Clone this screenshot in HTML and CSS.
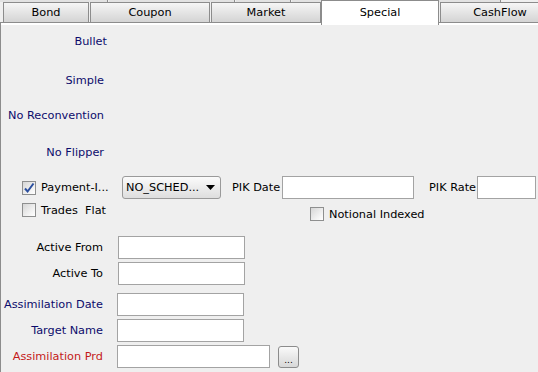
FILE: index.html
```html
<!DOCTYPE html>
<html lang="en">
<head>
  <meta charset="UTF-8">
  <title>Special</title>
  <link rel="stylesheet" href="styles.css">
</head>
<body>
  <div class="tabs">
    <div class="back-row">
      <span class="back b1"></span>
      <span class="back b2"></span>
      <span class="back b3"></span>
      <span class="back b4"></span>
      <span class="back b5"></span>
    </div>
    <div class="tab-row">
      <div class="tab tab-bond">Bond</div>
      <div class="tab tab-coupon">Coupon</div>
      <div class="tab tab-market">Market</div>
      <div class="tab tab-special selected">Special</div>
      <div class="tab tab-cash">CashFlow</div>
    </div>
  </div>

  <div class="panel">
    <div class="flags">
      <div class="flag flag-wide">Bullet</div>
      <div class="flag flag-simple">Simple</div>
      <div class="flag flag-recon">No Reconvention</div>
      <div class="flag flag-flipper">No Flipper</div>
    </div>

    <div class="opt-row">
      <label class="check-item">
        <span class="box checked">
          <svg width="12" height="12" viewBox="0 0 12 12"><path d="M2 6.5 L4.6 9.5 L10.5 1.5" fill="none" stroke="#2b4f9e" stroke-width="2"/></svg>
        </span>
        <span class="check-text pay-text">Payment-I...</span>
      </label>
      <div class="combo">
        <span>NO_SCHED...</span>
        <svg width="9" height="5" viewBox="0 0 9 5"><path d="M0 0 H9 L4.5 5 Z" fill="#000"/></svg>
      </div>
      <span class="plain pik-date">PIK Date</span>
      <div class="field f-pikdate"></div>
      <span class="plain pik-rate">PIK Rate</span>
      <div class="field f-pikrate"></div>
    </div>

    <div class="opt-row2">
      <label class="check-item trades">
        <span class="box"></span>
        <span class="check-text">Trades&nbsp; Flat</span>
      </label>
      <label class="check-item notional">
        <span class="box"></span>
        <span class="check-text">Notional Indexed</span>
      </label>
    </div>

    <div class="form">
      <div class="frow">
        <span class="flbl">Active From</span>
        <div class="field f-std"></div>
      </div>
      <div class="frow gap3">
        <span class="flbl">Active To</span>
        <div class="field f-std"></div>
      </div>
      <div class="frow gap8">
        <span class="flbl navy">Assimilation Date</span>
        <div class="field f-std tight"></div>
      </div>
      <div class="frow gap3">
        <span class="flbl navy">Target Name</span>
        <div class="field f-std tight"></div>
      </div>
      <div class="frow gap3">
        <span class="flbl red">Assimilation Prd</span>
        <div class="field f-long tight"></div>
        <button class="dots">...</button>
      </div>
    </div>
  </div>
</body>
</html>
```

FILE: styles.css
```css
html, body {
  margin: 0;
  padding: 0;
}

body {
  width: 538px;
  height: 372px;
  overflow: hidden;
  background: #efefef;
  font-family: "DejaVu Sans", Verdana, sans-serif;
  font-size: 11.3px;
  color: #000;
}

/* tab strip */
.tabs {
  height: 22px;
}

.back-row {
  display: flex;
  height: 2px;
  overflow: hidden;
}

.back {
  flex: none;
  height: 2px;
  background: #e2e2e2;
  border-right: 1px solid #8c8c8c;
  margin-right: 1px;
}

.b1 { width: 107px; }
.b2 { width: 125px; }
.b3 { width: 54px; }
.b4 { width: 144px; }
.b5 { width: 62px; }

.tab-row {
  display: flex;
  align-items: flex-end;
  height: 20px;
  padding-left: 3px;
}

.tab {
  flex: none;
  box-sizing: border-box;
  height: 20px;
  line-height: 20px;
  margin-right: 1px;
  text-align: center;
  white-space: nowrap;
  overflow: hidden;
  border: 1px solid #8c8c8c;
  border-bottom: 0;
  background: linear-gradient(#f6f6f6, #e6e6e6 45%, #d4d4d4);
}

.tab-bond { width: 86px; }
.tab-coupon { width: 120px; }
.tab-market { width: 110px; margin-right: 0; }
.tab-special { width: 118px; }
.tab-cash { width: 120px; }

.tab.selected {
  position: relative;
  z-index: 1;
  height: 25px;
  line-height: 23px;
  margin-bottom: -3px;
  background: #fff;
}

/* content panel */
.panel {
  box-sizing: border-box;
  height: 350px;
  border-top: 1px solid #8c8c8c;
  border-left: 1px solid #8c8c8c;
  box-shadow: inset 0 2px 0 #fff;
}

.flags {
  padding-top: 10px;
}

.flag {
  width: 103px;
  height: 18px;
  line-height: 18px;
  text-align: right;
  color: #0c0c6c;
}

.flag-wide { width: 106px; }
.flag-simple { margin-top: 21px; }
.flag-recon { margin-top: 17px; }
.flag-flipper { margin-top: 19px; }

.opt-row {
  display: flex;
  align-items: center;
  height: 23px;
  margin-top: 14px;
}

.check-item {
  display: flex;
  align-items: center;
}

.box {
  box-sizing: border-box;
  width: 14px;
  height: 14px;
  margin-left: 21px;
  border: 1px solid #8e8f8f;
  background: linear-gradient(135deg, #d6d6d6, #f4f4f4 70%, #fff);
  display: flex;
  align-items: center;
  justify-content: center;
}

.check-text {
  margin-left: 5px;
  white-space: nowrap;
}

.pay-text {
  width: 81px;
}

.combo {
  box-sizing: border-box;
  width: 99px;
  height: 23px;
  display: flex;
  align-items: center;
  justify-content: space-between;
  padding: 0 5px 0 3px;
  border: 1px solid #9a9a9a;
  border-radius: 3px;
  background: linear-gradient(#fbfbfb, #ececec 50%, #dedede);
}

.plain {
  white-space: nowrap;
}

.pik-date {
  width: 50px;
  margin-left: 11px;
}

.pik-rate {
  width: 48px;
  margin-left: 15px;
}

.field {
  box-sizing: border-box;
  height: 23px;
  border: 1px solid #a3a3a3;
  background: #fff;
}

.f-pikdate { width: 132px; }
.f-pikrate { width: 59px; }
.f-std { width: 127px; margin-left: 15px; }
.f-long { width: 153px; }
.field.tight { margin-left: 14px; }

.opt-row2 {
  display: flex;
  align-items: flex-start;
  height: 19px;
  margin-top: 4px;
}

.trades {
  flex: none;
  width: 110px;
}

.notional {
  margin-top: 4px;
}

.notional .box {
  margin-left: 199px;
}

.form {
  margin-top: 14px;
}

.frow {
  display: flex;
  align-items: center;
  height: 23px;
}

.gap3 { margin-top: 3px; }
.gap8 { margin-top: 8px; }

.flbl {
  width: 102px;
  text-align: right;
  white-space: nowrap;
}

.navy { color: #0c0c6c; }
.red { color: #c41a1a; }

.dots {
  box-sizing: border-box;
  width: 21px;
  height: 22px;
  margin-left: 8px;
  padding: 6px 0 0;
  border: 1px solid #8c8c8c;
  border-radius: 3px;
  background: linear-gradient(#fafafa, #e8e8e8 50%, #d8d8d8);
  font-family: "DejaVu Sans", sans-serif;
  font-size: 9px;
  line-height: 10px;
  color: #000;
}
```
